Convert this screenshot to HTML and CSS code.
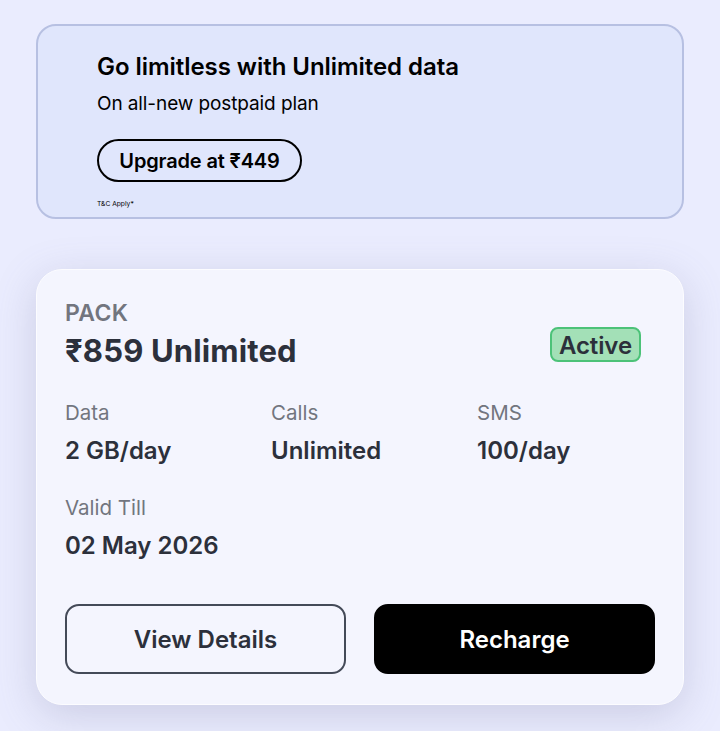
FILE: index.html
```html
<!DOCTYPE html>
<html lang="en">
<head>
    <meta charset="UTF-8">
    <meta name="viewport" content="width=device-width, initial-scale=1.0">
    <title>Pack details</title>
    <link rel="stylesheet" href="styles.css">
</head>
<body>
    <div class="banner">
        <h2 class="banner-title">Go limitless with Unlimited data</h2>
        <p class="banner-sub">On all-new postpaid plan</p>
        <a class="upgrade-btn">Upgrade at ₹449</a>
        <p class="terms">T&amp;C Apply*</p>
    </div>

    <div class="pack-card">
        <div class="pack-head">
            <div>
                <div class="pack-label">PACK</div>
                <div class="pack-name">₹859 Unlimited</div>
            </div>
            <span class="status-badge">Active</span>
        </div>

        <div class="pack-grid">
            <div class="info-item">
                <div class="info-label">Data</div>
                <div class="info-value">2 GB/day</div>
            </div>
            <div class="info-item">
                <div class="info-label">Calls</div>
                <div class="info-value">Unlimited</div>
            </div>
            <div class="info-item">
                <div class="info-label">SMS</div>
                <div class="info-value">100/day</div>
            </div>
            <div class="info-item">
                <div class="info-label">Valid Till</div>
                <div class="info-value">02 May 2026</div>
            </div>
        </div>

        <div class="pack-actions">
            <button class="btn btn-outline">View Details</button>
            <button class="btn btn-solid">Recharge</button>
        </div>
    </div>
</body>
</html>
```

FILE: styles.css
```css
* {
    box-sizing: border-box;
}
html, body {
    height: 731px;
    overflow: hidden;
}
body {
    margin: 0;
    padding: 24px 36px 0;
    background-color: #eaecfe;
    font-family: Inter, "Noto Sans", sans-serif;
    color: #2c303b;
}
p, h2 {
    margin: 0;
}
.banner {
    height: 195px;
    padding: 26px 0 0 59px;
    background-color: #e0e6fc;
    border: 2px solid #b7c0e2;
    border-radius: 20px;
    color: #000;
}
.banner-title {
    font-size: 24px;
    line-height: 30px;
    font-weight: 600;
    letter-spacing: -0.05px;
}
.banner-sub {
    margin-top: 10px;
    font-size: 19px;
    line-height: 24px;
    font-weight: 400;
    letter-spacing: -0.1px;
}
.upgrade-btn {
    display: flex;
    align-items: center;
    justify-content: center;
    width: 205px;
    height: 43px;
    margin-top: 23px;
    border: 2px solid #000;
    border-radius: 22px;
    font-size: 20px;
    font-weight: 600;
    letter-spacing: -0.15px;
}
.terms {
    margin-top: 17px;
    font-size: 6.7px;
    line-height: 10px;
}
.pack-card {
    height: 436px;
    margin-top: 50px;
    padding: 28px 28px 0;
    background-color: #f4f5fe;
    border: 1px solid #fcfcff;
    border-radius: 26px;
    box-shadow: 0 10px 40px rgba(110, 110, 150, 0.25);
}
.pack-head {
    display: flex;
    justify-content: space-between;
    align-items: flex-start;
    padding-right: 14px;
}
.pack-label {
    font-size: 23px;
    line-height: 30px;
    font-weight: 600;
    letter-spacing: 0.3px;
    color: #72757e;
}
.pack-name {
    margin-top: 5px;
    font-size: 31px;
    line-height: 36px;
    font-weight: 700;
    letter-spacing: 0.15px;
}
.status-badge {
    margin-top: 29px;
    padding: 0 7px;
    height: 35px;
    line-height: 33px;
    background-color: #a3e0b7;
    border: 2px solid #4cc278;
    border-radius: 8px;
    font-size: 24px;
    font-weight: 600;
    letter-spacing: -0.1px;
}
.pack-grid {
    display: grid;
    grid-template-columns: repeat(3, 206px);
    row-gap: 27px;
    margin-top: 30px;
}
.info-label {
    font-size: 20.5px;
    line-height: 28px;
    color: #72757e;
}
.info-value {
    margin-top: 8px;
    font-size: 24px;
    line-height: 32px;
    font-weight: 600;
}
.pack-actions {
    display: flex;
    gap: 28px;
    margin-top: 42px;
}
.btn {
    flex: 1;
    height: 70px;
    border-radius: 14px;
    font-family: inherit;
    font-size: 24px;
    font-weight: 600;
}
.btn-outline {
    background-color: transparent;
    border: 2px solid #444a58;
    color: #2c303b;
}
.btn-solid {
    background-color: #000;
    border: 2px solid #000;
    color: #fff;
}
```
